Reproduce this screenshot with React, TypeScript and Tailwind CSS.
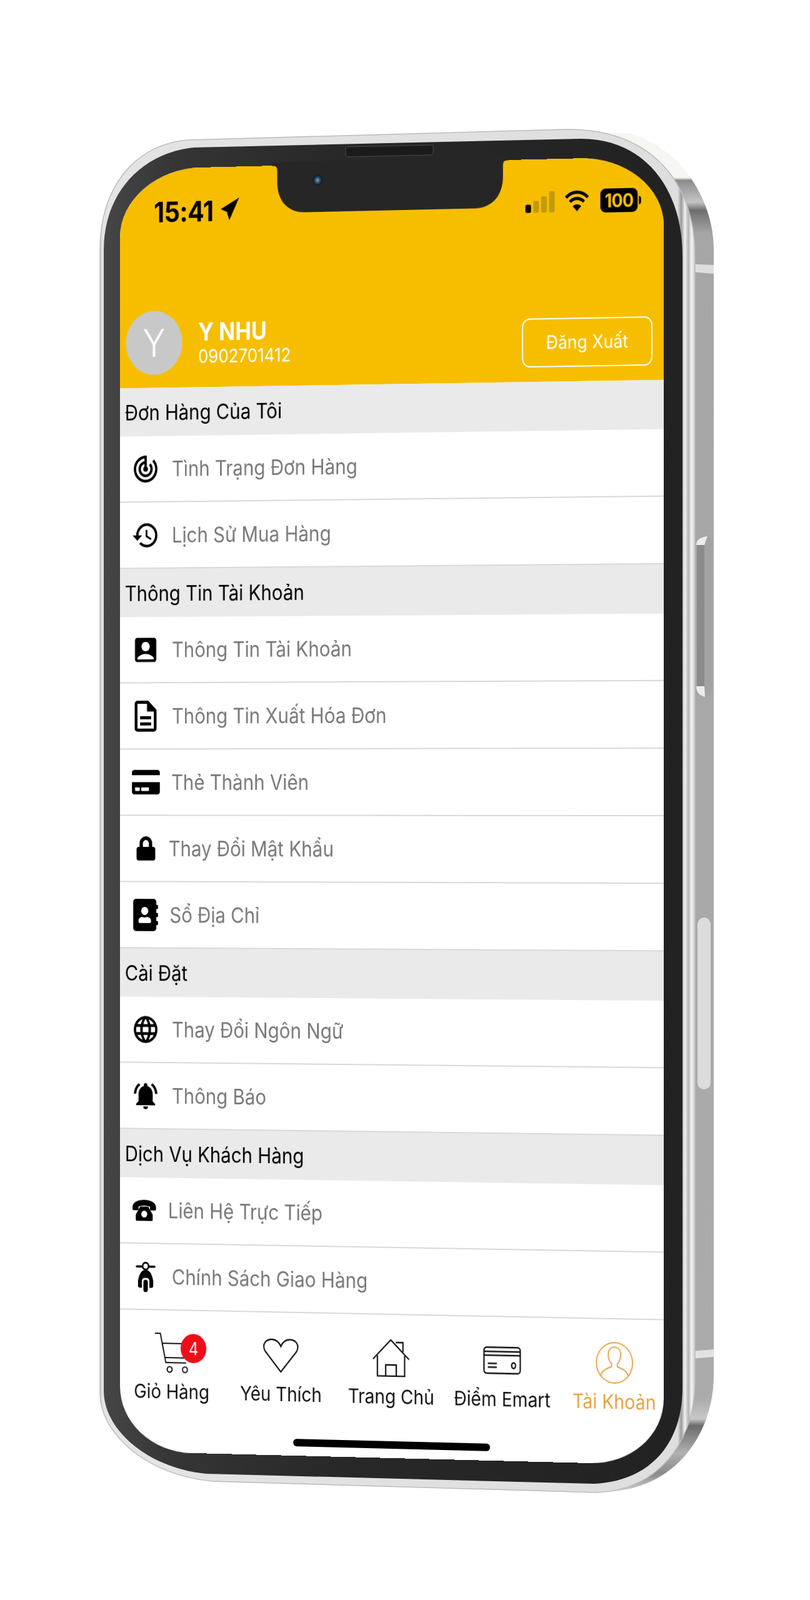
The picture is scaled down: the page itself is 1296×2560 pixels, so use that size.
import React from 'react';
import {
  MdTrackChanges,
  MdHistory,
  MdAccountBox,
  MdOutlineDescription,
  MdLanguage,
  MdNotificationsActive,
} from 'react-icons/md';
import { FaCreditCard, FaLock, FaAddressBook } from 'react-icons/fa';

function PhoneIcon() {
  return (
    <svg className="ml-[-5px]" width="45" height="36" viewBox="0 0 45 36" fill="#000">
      <path d="M1 13C1 5 11 1 22.5 1S44 5 44 13v3q0 2-2 2h-7q-2 0-2-2v-4c-5-2-16-2-21 0v4q0 2-2 2H3q-2 0-2-2z" />
      <path d="M15 12h15l8 13v8q0 2-2 2H9q-2 0-2-2v-8z" />
      <circle cx="22.5" cy="24" r="5.5" fill="#fff" />
    </svg>
  );
}

function ScooterIcon() {
  return (
    <svg width="36" height="50" viewBox="0 0 36 50" fill="#000">
      <rect x="0" y="7" width="36" height="3.5" rx="1.7" />
      <circle cx="18" cy="8" r="5.5" fill="#fff" stroke="#000" strokeWidth="3" />
      <path d="M18 14C10 14 6 22 4 32v8q0 3 4 3h3V32q0-5 7-5t7 5v11h3q4 0 4-3v-8c-2-10-6-18-14-18z" />
      <rect x="14" y="30" width="8" height="20" rx="4" />
    </svg>
  );
}

function CartIcon() {
  return (
    <div className="relative w-[61px] h-[66px]">
      <svg width="61" height="66" viewBox="0 0 61 66" fill="none" stroke="#111" strokeWidth="2.2">
        <path d="M0 1h10l10 47h37" />
        <path d="M14 17h46l-3 23H19" />
        <circle cx="27" cy="59" r="4.5" />
        <circle cx="55" cy="59" r="4.5" />
      </svg>
      <span className="absolute left-[47px] top-[1px] w-[47px] h-[47px] rounded-full bg-[#f00d1a] text-white text-[28px] flex items-center justify-center">
        4
      </span>
    </div>
  );
}

function HeartIcon() {
  return (
    <svg width="67" height="56" viewBox="0 0 67 56" fill="none" stroke="#111" strokeWidth="2.4">
      <path d="M33.5 54 5 21C-2 9 8 2 17 2c8 0 14 5 16.5 11C36 7 42 2 50 2c9 0 19 7 12 19z" />
    </svg>
  );
}

function HomeIcon() {
  return (
    <svg width="67" height="60" viewBox="0 0 67 60" fill="none" stroke="#111" strokeWidth="2.4">
      <path d="M1 32 33 1l33 31" />
      <path d="M42 5h13v15" />
      <path d="M9 26v33h49V26" />
      <path d="M24 59V41h19v18" />
    </svg>
  );
}

function CardIcon() {
  return (
    <svg width="67" height="44" viewBox="0 0 67 44" fill="none" stroke="#111" strokeWidth="2.4">
      <rect x="1.2" y="1.2" width="64.6" height="41.6" rx="5" />
      <path d="M1 8h65M1 14h65M8 27h16M8 33h16" />
      <ellipse cx="54" cy="30" rx="3.5" ry="4.5" />
    </svg>
  );
}

function ProfileIcon() {
  return (
    <svg width="68" height="66" viewBox="0 0 68 66" fill="none" stroke="#e8a33d" strokeWidth="2">
      <circle cx="34" cy="33" r="32" />
      <path d="M10 54c1-8 9-11 19-15v-4c-3-3-6-8-6-14 0-8 4-13 11-13s11 5 11 13c0 6-3 11-6 14v4c10 4 18 7 19 15" />
    </svg>
  );
}

type Row = { icon: React.ReactNode; label: string; ml: string };
type Section = { title: string; rows: Row[] };

const sections: Section[] = [
  {
    title: 'Đơn Hàng Của Tôi',
    rows: [
      { icon: <MdTrackChanges size={52} />, label: 'Tình Trạng Đơn Hàng', ml: 'ml-[1px]' },
      { icon: <MdHistory size={52} />, label: 'Lịch Sử Mua Hàng', ml: 'ml-[1px]' },
    ],
  },
  {
    title: 'Thông Tin Tài Khoản',
    rows: [
      { icon: <MdAccountBox size={52} />, label: 'Thông Tin Tài Khoản', ml: 'ml-[1px]' },
      { icon: <MdOutlineDescription size={60} />, label: 'Thông Tin Xuất Hóa Đơn', ml: 'ml-[1px]' },
      { icon: <FaCreditCard size={51} />, label: 'Thẻ Thành Viên', ml: 'ml-[0px]' },
      { icon: <FaLock size={39} />, label: 'Thay Đổi Mật Khẩu', ml: 'ml-[-5px]' },
      { icon: <FaAddressBook size={52} />, label: 'Sổ Địa Chỉ', ml: 'ml-[-3px]' },
    ],
  },
  {
    title: 'Cài Đặt',
    rows: [
      { icon: <MdLanguage size={52} />, label: 'Thay Đổi Ngôn Ngữ', ml: 'ml-[1px]' },
      { icon: <MdNotificationsActive size={52} />, label: 'Thông Báo', ml: 'ml-[1px]' },
    ],
  },
  {
    title: 'Dịch Vụ Khách Hàng',
    rows: [
      { icon: <PhoneIcon />, label: 'Liên Hệ Trực Tiếp', ml: 'ml-[-6px]' },
      { icon: <ScooterIcon />, label: 'Chính Sách Giao Hàng', ml: 'ml-[1px]' },
    ],
  },
];

const navItems = [
  { icon: <CartIcon />, label: 'Giỏ Hàng', color: 'text-[#111]' },
  { icon: <HeartIcon />, label: 'Yêu Thích', color: 'text-[#111]' },
  { icon: <HomeIcon />, label: 'Trang Chủ', color: 'text-[#111]' },
  { icon: <CardIcon />, label: 'Điểm Emart', color: 'text-[#111]' },
  { icon: <ProfileIcon />, label: 'Tài Khoản', color: 'text-[#e8a33d]' },
];

// the phone body is a drawing: glass rim, steel side, bezel, speaker
function PhoneFrame() {
  return (
    <svg className="absolute inset-0" width="1296" height="2560" viewBox="0 0 1296 2560">
      <defs>
        <linearGradient id="side" gradientUnits="userSpaceOnUse" x1="0" y1="210" x2="0" y2="2390">
          <stop offset="0" stopColor="#f6f6f2" />
          <stop offset="0.034" stopColor="#f6f6f2" />
          <stop offset="0.036" stopColor="#8c8c8c" />
          <stop offset="0.052" stopColor="#c4c4c4" />
          <stop offset="0.058" stopColor="#6e6e6e" />
          <stop offset="0.075" stopColor="#a6a6a6" />
          <stop offset="0.93" stopColor="#ababab" />
          <stop offset="0.945" stopColor="#c8c8c8" />
          <stop offset="0.95" stopColor="#6a6a6a" />
          <stop offset="0.97" stopColor="#b0b0b0" />
          <stop offset="0.985" stopColor="#8a8a8a" />
          <stop offset="1" stopColor="#d8d8d8" />
        </linearGradient>
        <linearGradient id="rim" gradientUnits="userSpaceOnUse" x1="158" y1="0" x2="1113" y2="0">
          <stop offset="0" stopColor="#b4b4b4" />
          <stop offset="0.006" stopColor="#e4e4e4" />
          <stop offset="0.97" stopColor="#dedede" />
          <stop offset="0.976" stopColor="#9a9a9a" />
          <stop offset="0.982" stopColor="#f2f2f2" />
          <stop offset="0.988" stopColor="#b4b4b4" />
          <stop offset="0.993" stopColor="#f4f4f4" />
          <stop offset="1" stopColor="#c4c4c4" />
        </linearGradient>
        <linearGradient id="bezel" gradientUnits="userSpaceOnUse" x1="166" y1="0" x2="1092" y2="0">
          <stop offset="0" stopColor="#464646" />
          <stop offset="0.12" stopColor="#353535" />
          <stop offset="0.4" stopColor="#282828" />
          <stop offset="1" stopColor="#222222" />
        </linearGradient>
      </defs>
      <path
        d="M900 208 1010 214C1090 238 1142 320 1142 400V2200C1142 2290 1085 2378 980 2386L900 2382Z"
        fill="url(#side)"
      />
      <path d="M1093 422 1142 424V438L1093 434Z" fill="#dedede" />
      <path d="M1093 2163 1142 2159V2171L1093 2175Z" fill="#e2e2e2" />
      <rect x="1115" y="858" width="25" height="257" rx="12" fill="#a2a2a2" />
      <rect x="1115" y="866" width="12" height="241" fill="#8a8a8a" />
      <path d="M1114 872Q1114 860 1132 858L1127 872ZM1114 1098Q1114 1112 1128 1115L1127 1098Z" fill="#ececec" />
      <rect x="1116" y="1468" width="21" height="275" rx="10.5" fill="#dcdcdc" />
      <path
        d="M160 400C160 300 215 232 300 224L905 207C1040 205 1112 290 1112 410V2210C1112 2310 1050 2385 955 2388L340 2370C230 2360 160 2290 160 2230Z"
        fill="url(#rim)"
        stroke="#bcbcbc"
        strokeWidth="1.5"
      />
      <path
        d="M166 400C166 310 225 245 310 236L930 222C1030 222 1092 300 1092 410V2220C1092 2310 1040 2370 950 2374L330 2358C240 2350 166 2290 166 2225Z"
        fill="url(#bezel)"
      />
      <path d="M553 235 693 232V243Q693 248 688 248L558 251Q553 251 553 246Z" fill="#1b1b1b" stroke="#4a4a4a" />
    </svg>
  );
}

export default function App() {
  return (
    <div className="relative w-[1296px] h-[2560px] bg-white overflow-hidden font-['Inter',sans-serif]">
      <PhoneFrame />
      <div className="absolute left-[192px] top-[271px] w-[978px] h-[2072px] origin-top-left [transform:matrix3d(0.87131,-0.021032,0,-0.000020997,0,0.98986,0,0,0,0,1,0,0,0,0,1)]">
        <div className="h-full bg-white overflow-hidden rounded-[150px_150px_130px_130px/110px_110px_105px_105px] flex flex-col">
          <header className="h-[354px] shrink-0 bg-[#f7be00] flex flex-col">
            <div className="flex items-center justify-between h-[40px] mt-[48px] pl-[62px] pr-[40px]">
              <div className="flex items-center gap-[11px] mt-[4px]">
                <span className="text-[45px] leading-none font-bold text-black tracking-[-0.5px]">15:41</span>
                <svg className="mt-[-4px]" width="38" height="38" viewBox="0 0 32 34" fill="#000">
                  <path d="M31 1 15 33 11 21 1 17Z" />
                </svg>
              </div>
              <div className="flex items-center">
                <svg width="52" height="34" viewBox="0 0 52 34">
                  <rect x="0" y="21" width="10" height="13" rx="3" fill="#000" />
                  <rect x="14" y="15" width="10" height="19" rx="3" fill="#c29a0c" />
                  <rect x="28" y="8" width="10" height="26" rx="3" fill="#c29a0c" />
                  <rect x="42" y="0" width="10" height="34" rx="3" fill="#c29a0c" />
                </svg>
                <svg className="ml-[17px]" width="45" height="34" viewBox="0 0 45 34" fill="none" stroke="#000" strokeWidth="5">
                  <path d="M3 11C14 0 31 0 42 11" />
                  <path d="M10 18C17 11 28 11 35 18" />
                  <path d="M22.5 33 15 25C19 21 26 21 30 25Z" fill="#000" stroke="none" />
                </svg>
                <div className="ml-[19px] w-[66px] h-[38px] rounded-[9px] bg-black flex items-center justify-center text-[#f7be00] text-[30px] font-bold leading-none tracking-[-1px]">
                  100
                </div>
                <span className="ml-[2px] w-[4px] h-[13px] rounded-r-full bg-black" />
              </div>
            </div>
            <div className="mt-auto mb-[21px] flex items-center pl-[11px] pr-[20px]">
              <div className="w-[103px] h-[103px] rounded-full bg-[#c8c8c8] flex items-center justify-center text-white text-[62px] font-light leading-none">
                Y
              </div>
              <div className="ml-[29px] flex flex-col">
                <span className="text-white text-[39px] leading-[44px] font-bold">Y NHU</span>
                <span className="text-white text-[29.5px] leading-[34px]">0902701412</span>
              </div>
              <button className="ml-auto mt-[20px] w-[231px] h-[78px] rounded-[14px] border-2 border-white text-white text-[29.5px]">
                Đăng Xuất
              </button>
            </div>
          </header>

          {sections.map((section) => (
            <section key={section.title}>
              <div className="h-[78px] bg-[#eaeaea] flex items-center pl-[9px] pt-[3px] text-[33.5px] text-black">
                {section.title}
              </div>
              {section.rows.map((row) => (
                <div key={row.label} className="h-[107px] border-b-2 border-[#d9d9d9] flex items-center">
                  <div className="w-[94px] flex justify-center shrink-0 text-black">{row.icon}</div>
                  <span className={`${row.ml} pt-[2px] text-[33.5px] text-[#787878]`}>{row.label}</span>
                </div>
              ))}
            </section>
          ))}

          <nav className="ml-[-5px] w-[995px] grid grid-cols-5 pt-[36px]">
            {navItems.map((item) => (
              <div key={item.label} className="flex flex-col items-center">
                <div className="h-[66px] flex items-center justify-center">{item.icon}</div>
                <span className={`mt-[9px] text-[31.5px] leading-[40px] whitespace-nowrap ${item.color}`}>{item.label}</span>
              </div>
            ))}
          </nav>
          <div className="mt-auto mb-[15px] ml-[316px] w-[354px] h-[12px] rounded-full bg-black shrink-0" />
        </div>
        {/* notch sits over the clipped screen edge */}
        <svg className="absolute left-[277px] top-[-6px]" width="426" height="82" viewBox="0 -6 426 82">
          <path
            d="M0 0H426C416 0 416 4 416 12V26C416 58 395 76 365 76H61C30 76 10 58 10 26V12C10 4 10 0 0 0Z"
            fill="#262626"
          />
          <rect x="0" y="-6" width="426" height="6.5" fill="#262626" />
          <circle cx="83" cy="25" r="10" fill="#1b222b" />
          <circle cx="83" cy="25" r="6" fill="#2f4a63" />
          <circle cx="83" cy="25" r="3" fill="#5a8ab0" />
        </svg>
      </div>
    </div>
  );
}
